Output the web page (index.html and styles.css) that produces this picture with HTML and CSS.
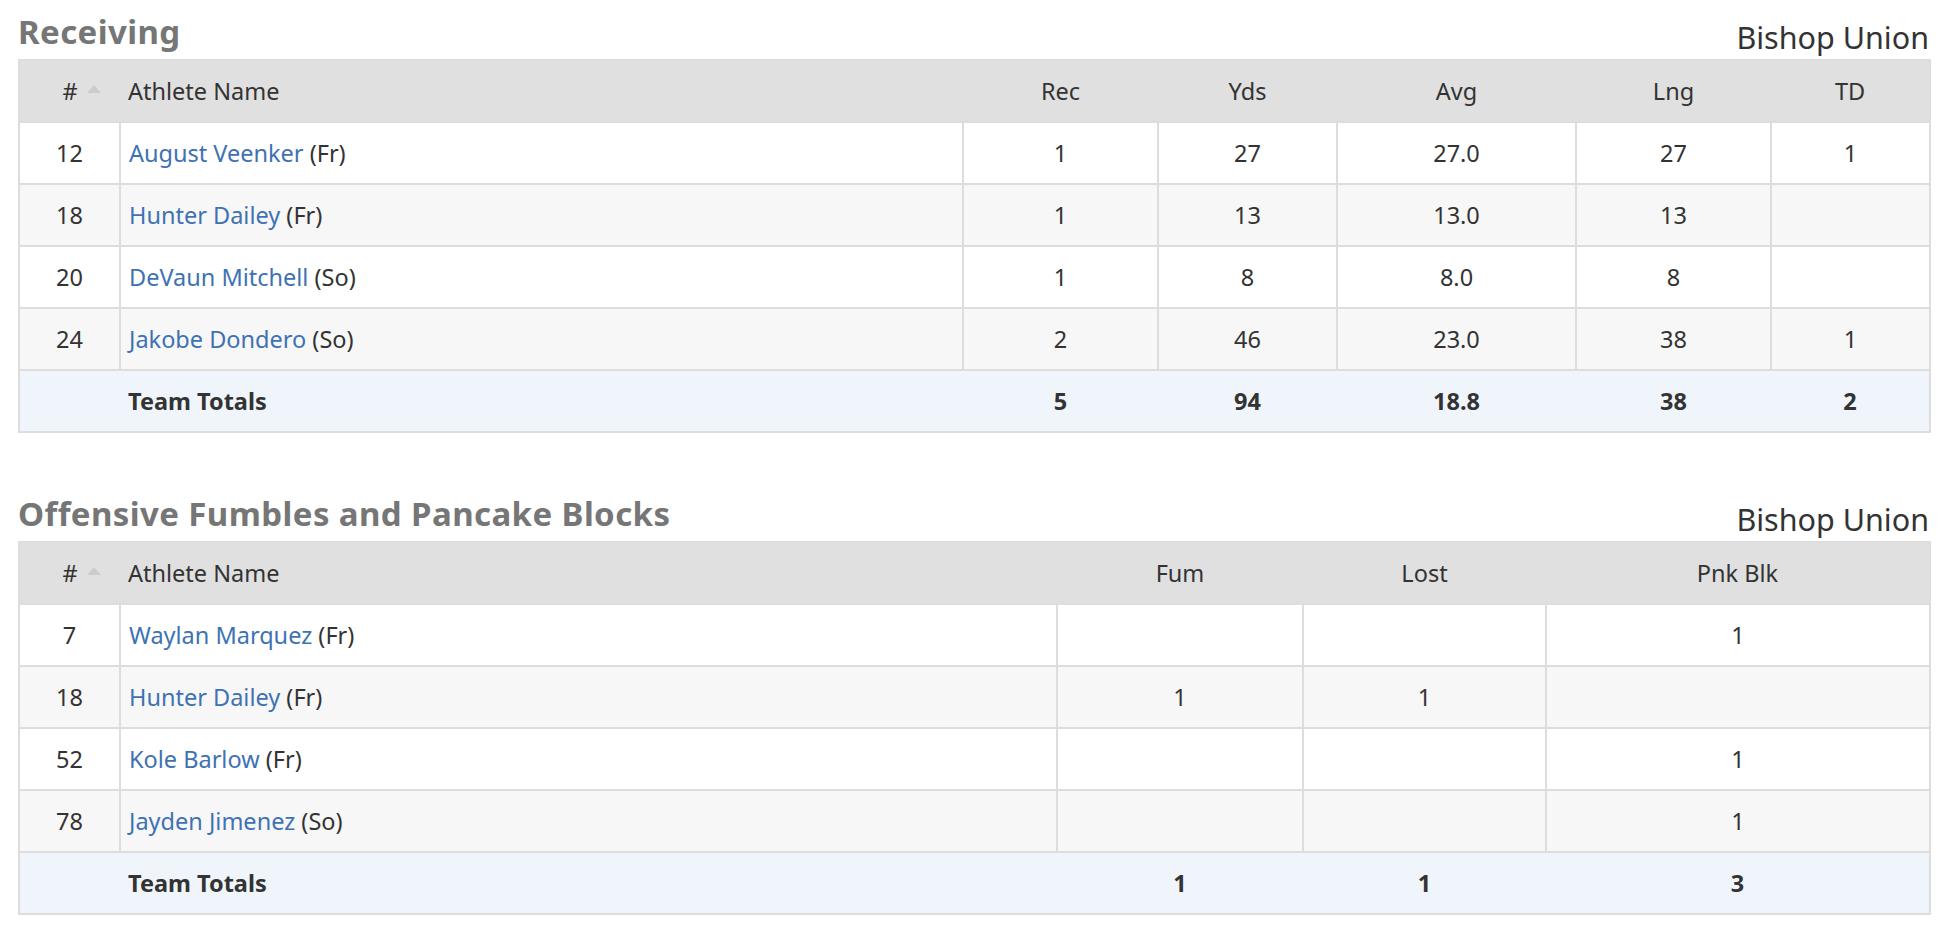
FILE: index.html
```html
<!DOCTYPE html>
<html lang="en">
<head>
<meta charset="utf-8">
<title>Stats</title>
<link rel="stylesheet" href="styles.css">
</head>
<body>
<div class="page">
  <section class="stat-section">
    <div class="section-head">
      <h2 class="section-title">Receiving</h2>
      <div class="team-name">Bishop Union</div>
    </div>
    <table class="stats">
      <colgroup>
        <col class="c-num"><col class="c-name-r"><col class="c-r1"><col class="c-r2"><col class="c-r3"><col class="c-r4"><col class="c-r5">
      </colgroup>
      <thead>
        <tr><th class="num sortable"><span class="sort">#</span></th><th class="name">Athlete Name</th><th>Rec</th><th>Yds</th><th>Avg</th><th>Lng</th><th>TD</th></tr>
      </thead>
      <tbody>
        <tr><td class="num">12</td><td class="name"><a href="#">August Veenker</a> (Fr)</td><td>1</td><td>27</td><td>27.0</td><td>27</td><td>1</td></tr>
        <tr><td class="num">18</td><td class="name"><a href="#">Hunter Dailey</a> (Fr)</td><td>1</td><td>13</td><td>13.0</td><td>13</td><td></td></tr>
        <tr><td class="num">20</td><td class="name"><a href="#">DeVaun Mitchell</a> (So)</td><td>1</td><td>8</td><td>8.0</td><td>8</td><td></td></tr>
        <tr><td class="num">24</td><td class="name"><a href="#">Jakobe Dondero</a> (So)</td><td>2</td><td>46</td><td>23.0</td><td>38</td><td>1</td></tr>
      </tbody>
      <tfoot>
        <tr><td class="num"></td><td class="name">Team Totals</td><td>5</td><td>94</td><td>18.8</td><td>38</td><td>2</td></tr>
      </tfoot>
    </table>
  </section>

  <section class="stat-section">
    <div class="section-head">
      <h2 class="section-title">Offensive Fumbles and Pancake Blocks</h2>
      <div class="team-name">Bishop Union</div>
    </div>
    <table class="stats">
      <colgroup>
        <col class="c-num"><col class="c-name-f"><col class="c-f1"><col class="c-f2"><col class="c-f3">
      </colgroup>
      <thead>
        <tr><th class="num sortable"><span class="sort">#</span></th><th class="name">Athlete Name</th><th>Fum</th><th>Lost</th><th>Pnk Blk</th></tr>
      </thead>
      <tbody>
        <tr><td class="num">7</td><td class="name"><a href="#">Waylan Marquez</a> (Fr)</td><td></td><td></td><td>1</td></tr>
        <tr><td class="num">18</td><td class="name"><a href="#">Hunter Dailey</a> (Fr)</td><td>1</td><td>1</td><td></td></tr>
        <tr><td class="num">52</td><td class="name"><a href="#">Kole Barlow</a> (Fr)</td><td></td><td></td><td>1</td></tr>
        <tr><td class="num">78</td><td class="name"><a href="#">Jayden Jimenez</a> (So)</td><td></td><td></td><td>1</td></tr>
      </tbody>
      <tfoot>
        <tr><td class="num"></td><td class="name">Team Totals</td><td>1</td><td>1</td><td>3</td></tr>
      </tfoot>
    </table>
  </section>
</div>
</body>
</html>
```

FILE: styles.css
```css
html, body {
  margin: 0;
  padding: 0;
  background: #ffffff;
}

body {
  font-family: "Noto Sans", "DejaVu Sans", sans-serif;
  color: #333333;
}

.page {
  padding: 13px 23px 0 18px;
}

.stat-section + .stat-section {
  margin-top: 62px;
}

.section-head {
  display: flex;
  justify-content: space-between;
  align-items: flex-end;
}

.section-title {
  margin: 0 0 8px 0;
  font-size: 33px;
  line-height: 38px;
  font-weight: 700;
  letter-spacing: 0.4px;
  color: #767676;
}

.team-name {
  margin-bottom: 4px;
  font-size: 30.5px;
  line-height: 36px;
  color: #333333;
}

.stats {
  width: 100%;
  table-layout: fixed;
  border-collapse: collapse;
  border: 2px solid #dddddd;
  font-size: 23.5px;
}

.c-num { width: 101px; }
.c-name-r { width: 843px; }
.c-r1 { width: 195px; }
.c-r2 { width: 179px; }
.c-r3 { width: 239px; }
.c-r4 { width: 195px; }
.c-r5 { width: 159px; }

.c-name-f { width: 937px; }
.c-f1 { width: 246px; }
.c-f2 { width: 243px; }
.c-f3 { width: 384px; }

.stats th,
.stats td {
  height: 60px;
  padding: 0 8px;
  text-align: center;
  vertical-align: middle;
  line-height: 30px;
}

.stats th {
  background: #e0e0e0;
  font-weight: 400;
  color: #333333;
  border: none;
}

.stats th.name,
.stats td.name {
  text-align: left;
}

.stats tbody td {
  border: 2px solid #dddddd;
  background: #ffffff;
}

.stats tbody tr:nth-child(even) td {
  background: #f7f7f7;
}

.stats tfoot td {
  background: #f0f5fc;
  font-weight: 700;
  border-top: 2px solid #dddddd;
  border-left: none;
  border-right: none;
}

.stats a {
  color: #3e72b3;
  text-decoration: none;
}

.sort {
  position: relative;
}

.sort::after {
  content: "";
  position: absolute;
  left: 25px;
  top: 10px;
  width: 0;
  height: 0;
  border-left: 7px solid transparent;
  border-right: 7px solid transparent;
  border-bottom: 8px solid #cccccc;
}
```
